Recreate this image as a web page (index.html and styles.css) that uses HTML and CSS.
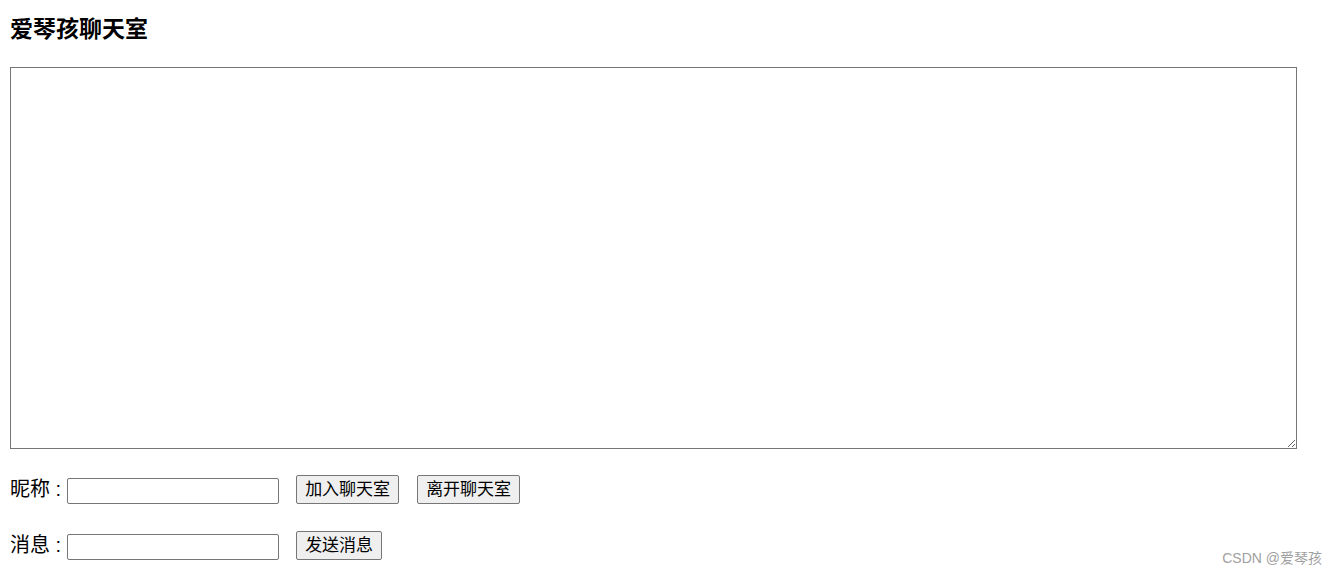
FILE: index.html
```html
<!DOCTYPE html>
<html lang="zh">
<head>
<meta charset="utf-8">
<title>爱琴孩聊天室</title>
<link rel="stylesheet" href="styles.css">
</head>
<body>
<h3 class="title">爱琴孩聊天室</h3>
<textarea class="board"></textarea>
<div class="row">
  <label class="label">昵称 :</label>
  <input class="field" type="text">
  <button class="btn">加入聊天室</button>
  <button class="btn">离开聊天室</button>
</div>
<div class="row">
  <label class="label">消息 :</label>
  <input class="field" type="text">
  <button class="btn">发送消息</button>
</div>
<div class="mark">CSDN @爱琴孩</div>
</body>
</html>
```
FILE: styles.css
```css
html, body {
  margin: 0;
  background: #fff;
}
body {
  padding: 14px 10px 0 10px;
  font-family: "Liberation Sans", "Noto Sans CJK SC", sans-serif;
  color: #000;
  position: relative;
  height: 573px;
  box-sizing: border-box;
}
.title {
  margin: 0 0 23px 0;
  font-size: 23px;
  line-height: 30px;
  font-weight: bold;
}
.board {
  display: block;
  width: 1287px;
  height: 382px;
  box-sizing: border-box;
  margin: 0;
  border: 1px solid #767676;
  resize: both;
}
.row {
  display: flex;
  align-items: flex-end;
  height: 29px;
  margin-top: 26px;
}
.row + .row {
  margin-top: 27px;
}
.label {
  font-size: 20px;
  line-height: 29px;
  margin-right: 6px;
}
.field {
  width: 212px;
  height: 26px;
  box-sizing: border-box;
  border: 1px solid #767676;
  border-radius: 2px;
  margin: 0 17px 0 0;
  padding: 1px 2px;
}
.btn {
  height: 29px;
  box-sizing: border-box;
  font-family: "Liberation Sans", "Noto Sans CJK SC", sans-serif;
  font-size: 17px;
  line-height: 20px;
  padding: 1px 8px;
  background: #efefef;
  border: 1px solid #767676;
  border-radius: 2px;
  margin-right: 18px;
  color: #000;
}
.mark {
  position: absolute;
  right: 15px;
  bottom: 6px;
  font-size: 14px;
  color: #a0a0a0;
}
```
